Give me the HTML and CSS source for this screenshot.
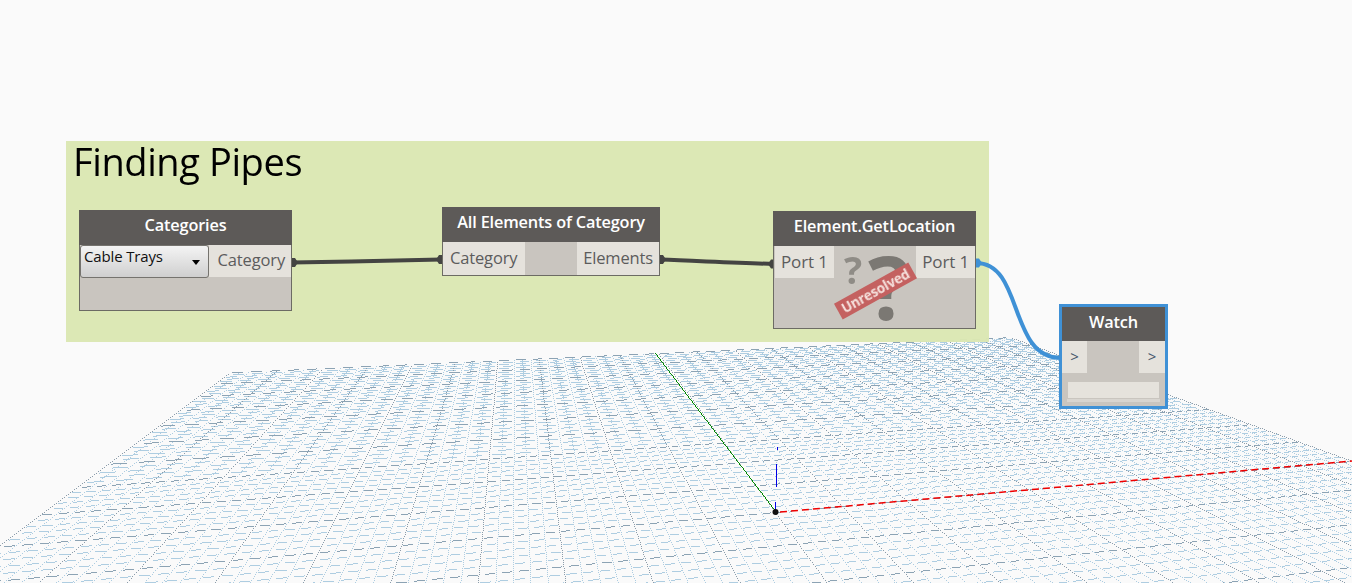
FILE: index.html
```html
<!DOCTYPE html>
<html lang="en">
<head>
<meta charset="utf-8">
<title>Finding Pipes</title>
<link rel="stylesheet" href="styles.css">
</head>
<body>
<main class="workspace">
  <canvas id="grid" class="grid" width="1352" height="583"></canvas>

  <section class="group">
    <h1 class="group-title">Finding Pipes</h1>
  </section>

  <svg class="wires" width="1352" height="583" viewBox="0 0 1352 583" aria-hidden="true">
    <path class="wire" d="M292 262.5 C340 262 400 260 441 259.5"/>
    <path class="wire" d="M660 259.5 C700 261 740 263 775 264"/>
    <path class="wire wire-live" d="M976 263 C1024 263 1008 358 1061 358"/>
    <path class="pin" d="M291 258 L295 258 L298 262.5 L295 267 L291 267 Z"/>
    <path class="pin" d="M443 255 L439 255 L436 259.5 L439 264 L443 264 Z"/>
    <path class="pin" d="M659 255 L663 255 L666 259.5 L663 264 L659 264 Z"/>
    <path class="pin" d="M774 259.5 L771 259.5 L768 264 L771 268.5 L774 268.5 Z"/>
    <path class="pin-live" d="M975 258.500 L979 258.500 L982 263 L979 267.500 L975 267.500 Z"/>
  </svg>

  <article class="node node-categories">
    <header class="node-head">Categories</header>
    <div class="node-body">
      <div class="combo"><span>Cable Trays</span><i class="combo-arrow"></i></div>
      <div class="port port-out">Category</div>
    </div>
  </article>

  <article class="node node-elements">
    <header class="node-head">All Elements of Category</header>
    <div class="node-body">
      <div class="port port-in">Category</div>
      <div class="port port-out">Elements</div>
    </div>
  </article>

  <article class="node node-location">
    <header class="node-head">Element.GetLocation</header>
    <div class="node-body">
      <div class="port port-in">Port 1</div>
      <div class="port port-out">Port 1</div>
    </div>
    <span class="mark mark-small">?</span>
    <span class="mark mark-big">?</span>
    <span class="ribbon">Unresolved</span>
  </article>

  <article class="node node-watch">
    <header class="node-head">Watch</header>
    <div class="node-body">
      <div class="port port-in">&gt;</div>
      <div class="port port-out">&gt;</div>
    </div>
    <div class="watch-value"></div>
    <div class="watch-strip"></div>
  </article>
</main>
<script src="app.js"></script>
</body>
</html>
```
FILE: styles.css
```css
* { box-sizing: border-box; }
html, body { margin: 0; height: 100%; overflow: hidden; background: #fafafa; }
.workspace {
  position: relative;
  width: 1352px;
  height: 583px;
  overflow: hidden;
  background: #fafafa;
  font-family: "Open Sans", "Noto Sans", sans-serif;
}
.grid { position: absolute; left: 0; top: 0; }
.group {
  position: absolute;
  left: 66px;
  top: 141px;
  width: 923px;
  height: 201px;
  padding: 0 7px;
  background: rgba(219, 231, 178, .96);
}
.group-title {
  margin: 0;
  font-size: 38px;
  line-height: 41px;
  font-weight: 400;
  color: #000;
  letter-spacing: -.4px;
}
.wires { position: absolute; left: 0; top: 0; }
.wire { fill: none; stroke: #444442; stroke-width: 4; }
.wire-live { stroke: #3f91d6; }
.pin { fill: #444442; }
.pin-live { fill: #3f91d6; }

.node {
  position: absolute;
  display: flex;
  flex-direction: column;
  background: #c9c5bf;
  border: 1px solid #6c6b64;
  border-top: 0;
}
.node-head {
  height: 35px;
  margin: 0 -1px;
  padding-bottom: 5px;
  flex: none;
  display: flex;
  align-items: center;
  justify-content: center;
  background: #5d5a58;
  color: #fff;
  font-size: 16.3px;
  font-weight: 600;
  letter-spacing: -.15px;
}
.node-body { display: flex; justify-content: space-between; }
.port {
  display: flex;
  align-items: center;
  background: #e5e2dc;
  color: #5c5c5c;
  font-size: 16.5px;
  letter-spacing: -.15px;
  height: 32px;
  padding-bottom: 3px;
}
.port-in { padding-left: 7px; }
.port-out { padding-right: 6px; justify-content: flex-end; }

.node-categories { left: 79px; top: 210px; width: 213px; height: 101px; }
.node-categories .port-out { width: 82px; }
.combo {
  width: 129px;
  height: 33px;
  display: flex;
  align-items: flex-start;
  justify-content: space-between;
  padding: 0 8px 0 3px;
  border: 1px solid #75736e;
  border-radius: 3px;
  background: linear-gradient(#f4f4f4, #cfcfcf);
  color: #111;
  font-size: 15px;
  letter-spacing: -.15px;
}
.combo-arrow {
  margin-top: 14px;
  border-left: 4px solid transparent;
  border-right: 4px solid transparent;
  border-top: 5px solid #000;
}

.node-elements { left: 442px; top: 207px; width: 218px; height: 69px; }
.node-elements .port { width: 82px; height: 33px; }

.node-location { left: 773px; top: 211px; width: 203px; height: 118px; }
.node-location .node-body { padding-left: 1px; }
.node-location .port { width: 59px; padding-bottom: 1px; font-size: 17px; }
.node-location .port-in { padding-left: 6px; }
.node-location .port-out { padding-right: 6px; }
.mark { position: absolute; font-family: "Open Sans", sans-serif; font-weight: 700; line-height: 1; }
.mark-small { left: 70px; top: 39px; font-size: 38px; color: #8f8c86; }
.mark-big { left: 94px; top: 31px; font-size: 88px; color: #7b7873; }
.ribbon {
  position: absolute;
  left: 59px;
  top: 71px;
  width: 85px;
  height: 18px;
  display: flex;
  align-items: center;
  justify-content: center;
  background: #c46160;
  color: #f6e2de;
  font-size: 13.5px;
  font-weight: 700;
  letter-spacing: -.1px;
  transform: rotate(-29deg);
}

.node-watch {
  left: 1059px;
  top: 304px;
  width: 109px;
  height: 105px;
  border: 3px solid #3f91d6;
}
.node-watch .node-head { margin: 0; height: 34px; }
.node-watch .port {
  width: 25px;
  justify-content: center;
  padding: 0 0 2px;
  font-size: 15px;
  color: #44566a;
}
.node-watch .port-out { width: 26px; }
.watch-value { height: 16px; margin: 9px 6px 0; background: #e5e2dc; }
.watch-strip { height: 3px; margin: 1px 5px 0; background: #d8d5d0; }
```
FILE: app.js
```js
(function () {
  var ctx = document.getElementById('grid').getContext('2d');
  var W = 1352, H = 583;
  var O = [775, 512], VX = [4579, 176], VY = [515, 158];
  var K = 55.9, M = 12.27, STEPS = 50, MAJOR = 5;
  var LIGHT = '#aecde1', DARK = '#8ca3b4', DARK_B = '#8c9dab';

  function along(V, s, c) {
    var t = s / (s + c);
    return [O[0] + (V[0] - O[0]) * t, O[1] + (V[1] - O[1]) * t];
  }
  function meet(a, b, c, d) {
    var x1 = b[0] - a[0], y1 = b[1] - a[1], x2 = d[0] - c[0], y2 = d[1] - c[1];
    var q = (c[0] - a[0]) * y2 - (c[1] - a[1]) * x2;
    var t = q / (x1 * y2 - y1 * x2);
    return [a[0] + x1 * t, a[1] + y1 * t];
  }
  function point(u, v) {
    return meet(VX, along(VY, v / MAJOR, M), VY, along(VX, u / MAJOR, K));
  }
  // Rows read as short dashes, one per cell (or per two cells towards the horizon),
  // which is how the aliased 3D grid comes out in the viewport.
  function row(v) {
    var a = point(-STEPS, v), b = point(STEPS, v);
    if (Math.min(a[1], b[1]) > H + 2) return;
    ctx.fillStyle = v % MAJOR === 0 ? DARK : LIGHT;
    var width = Math.abs(point(1, v)[0] - point(0, v)[0]);
    var step = width < 11 ? 2 : 1;
    var odd = ((v % 2) + 2) % 2;
    var span = width < 11 ? 0.58 : 0.6;
    for (var u = -STEPS; u < STEPS; u += step) {
      var s0 = u + (0.12 + odd * 0.22) * step;
      var s1 = Math.min(STEPS, s0 + span * step);
      var p = point(s0, v), q = point(s1, v);
      var x0 = Math.round(p[0]), x1 = Math.round(q[0]);
      if (x1 < 0 || x0 > W) continue;
      for (var x = x0; x < x1; x++) {
        var y = a[1] + (b[1] - a[1]) * (x - a[0]) / (b[0] - a[0]);
        ctx.fillRect(x, Math.round(y), 1, 1);
      }
    }
  }
  function col(u) {
    var a = point(u, STEPS), b = point(u, -STEPS);
    ctx.fillStyle = u % MAJOR === 0 ? DARK_B : LIGHT;
    var dx = b[0] - a[0], dy = b[1] - a[1];
    var n, i, p;
    if (Math.abs(dy) >= Math.abs(dx)) {
      n = Math.min(H, Math.floor(b[1]));
      for (i = Math.ceil(a[1]); i <= n; i++) {
        if (i % 2 === 0) ctx.fillRect(Math.round(a[0] + dx * (i - a[1]) / dy), i, 1, 1);
      }
    } else {
      var lo = Math.max(0, Math.ceil(Math.min(a[0], b[0])));
      var hi = Math.min(W, Math.floor(Math.max(a[0], b[0])));
      for (i = lo; i <= hi; i++) {
        p = a[1] + dy * (i - a[0]) / dx;
        if (i % 2 === 0) ctx.fillRect(i, Math.round(p), 1, 1);
      }
    }
  }
  var i;
  for (i = -STEPS; i <= STEPS; i++) { if (i % MAJOR) { col(i); row(i); } }
  for (i = -STEPS; i <= STEPS; i++) { if (!(i % MAJOR)) { col(i); row(i); } }

  // Y axis
  ctx.fillStyle = '#008a00';
  for (var gy = 353; gy < 510; gy++) {
    ctx.fillRect(Math.round(655 + (gy - 353) * 0.761), gy, 1, 1);
  }
  // X axis
  ctx.strokeStyle = '#f00000';
  ctx.lineWidth = 1.5;
  ctx.setLineDash([7, 4]);
  ctx.beginPath();
  ctx.moveTo(780, 512);
  ctx.lineTo(1352, 461);
  ctx.stroke();
  ctx.setLineDash([]);
  // Z axis
  ctx.fillStyle = '#0000e6';
  ctx.fillRect(777, 447, 1, 3);
  ctx.fillRect(776, 464, 1, 23);
  ctx.fillRect(775, 502, 1, 9);
  // Origin
  ctx.fillStyle = '#111';
  ctx.beginPath();
  ctx.arc(775.5, 512, 3, 0, Math.PI * 2);
  ctx.fill();
})();
```
